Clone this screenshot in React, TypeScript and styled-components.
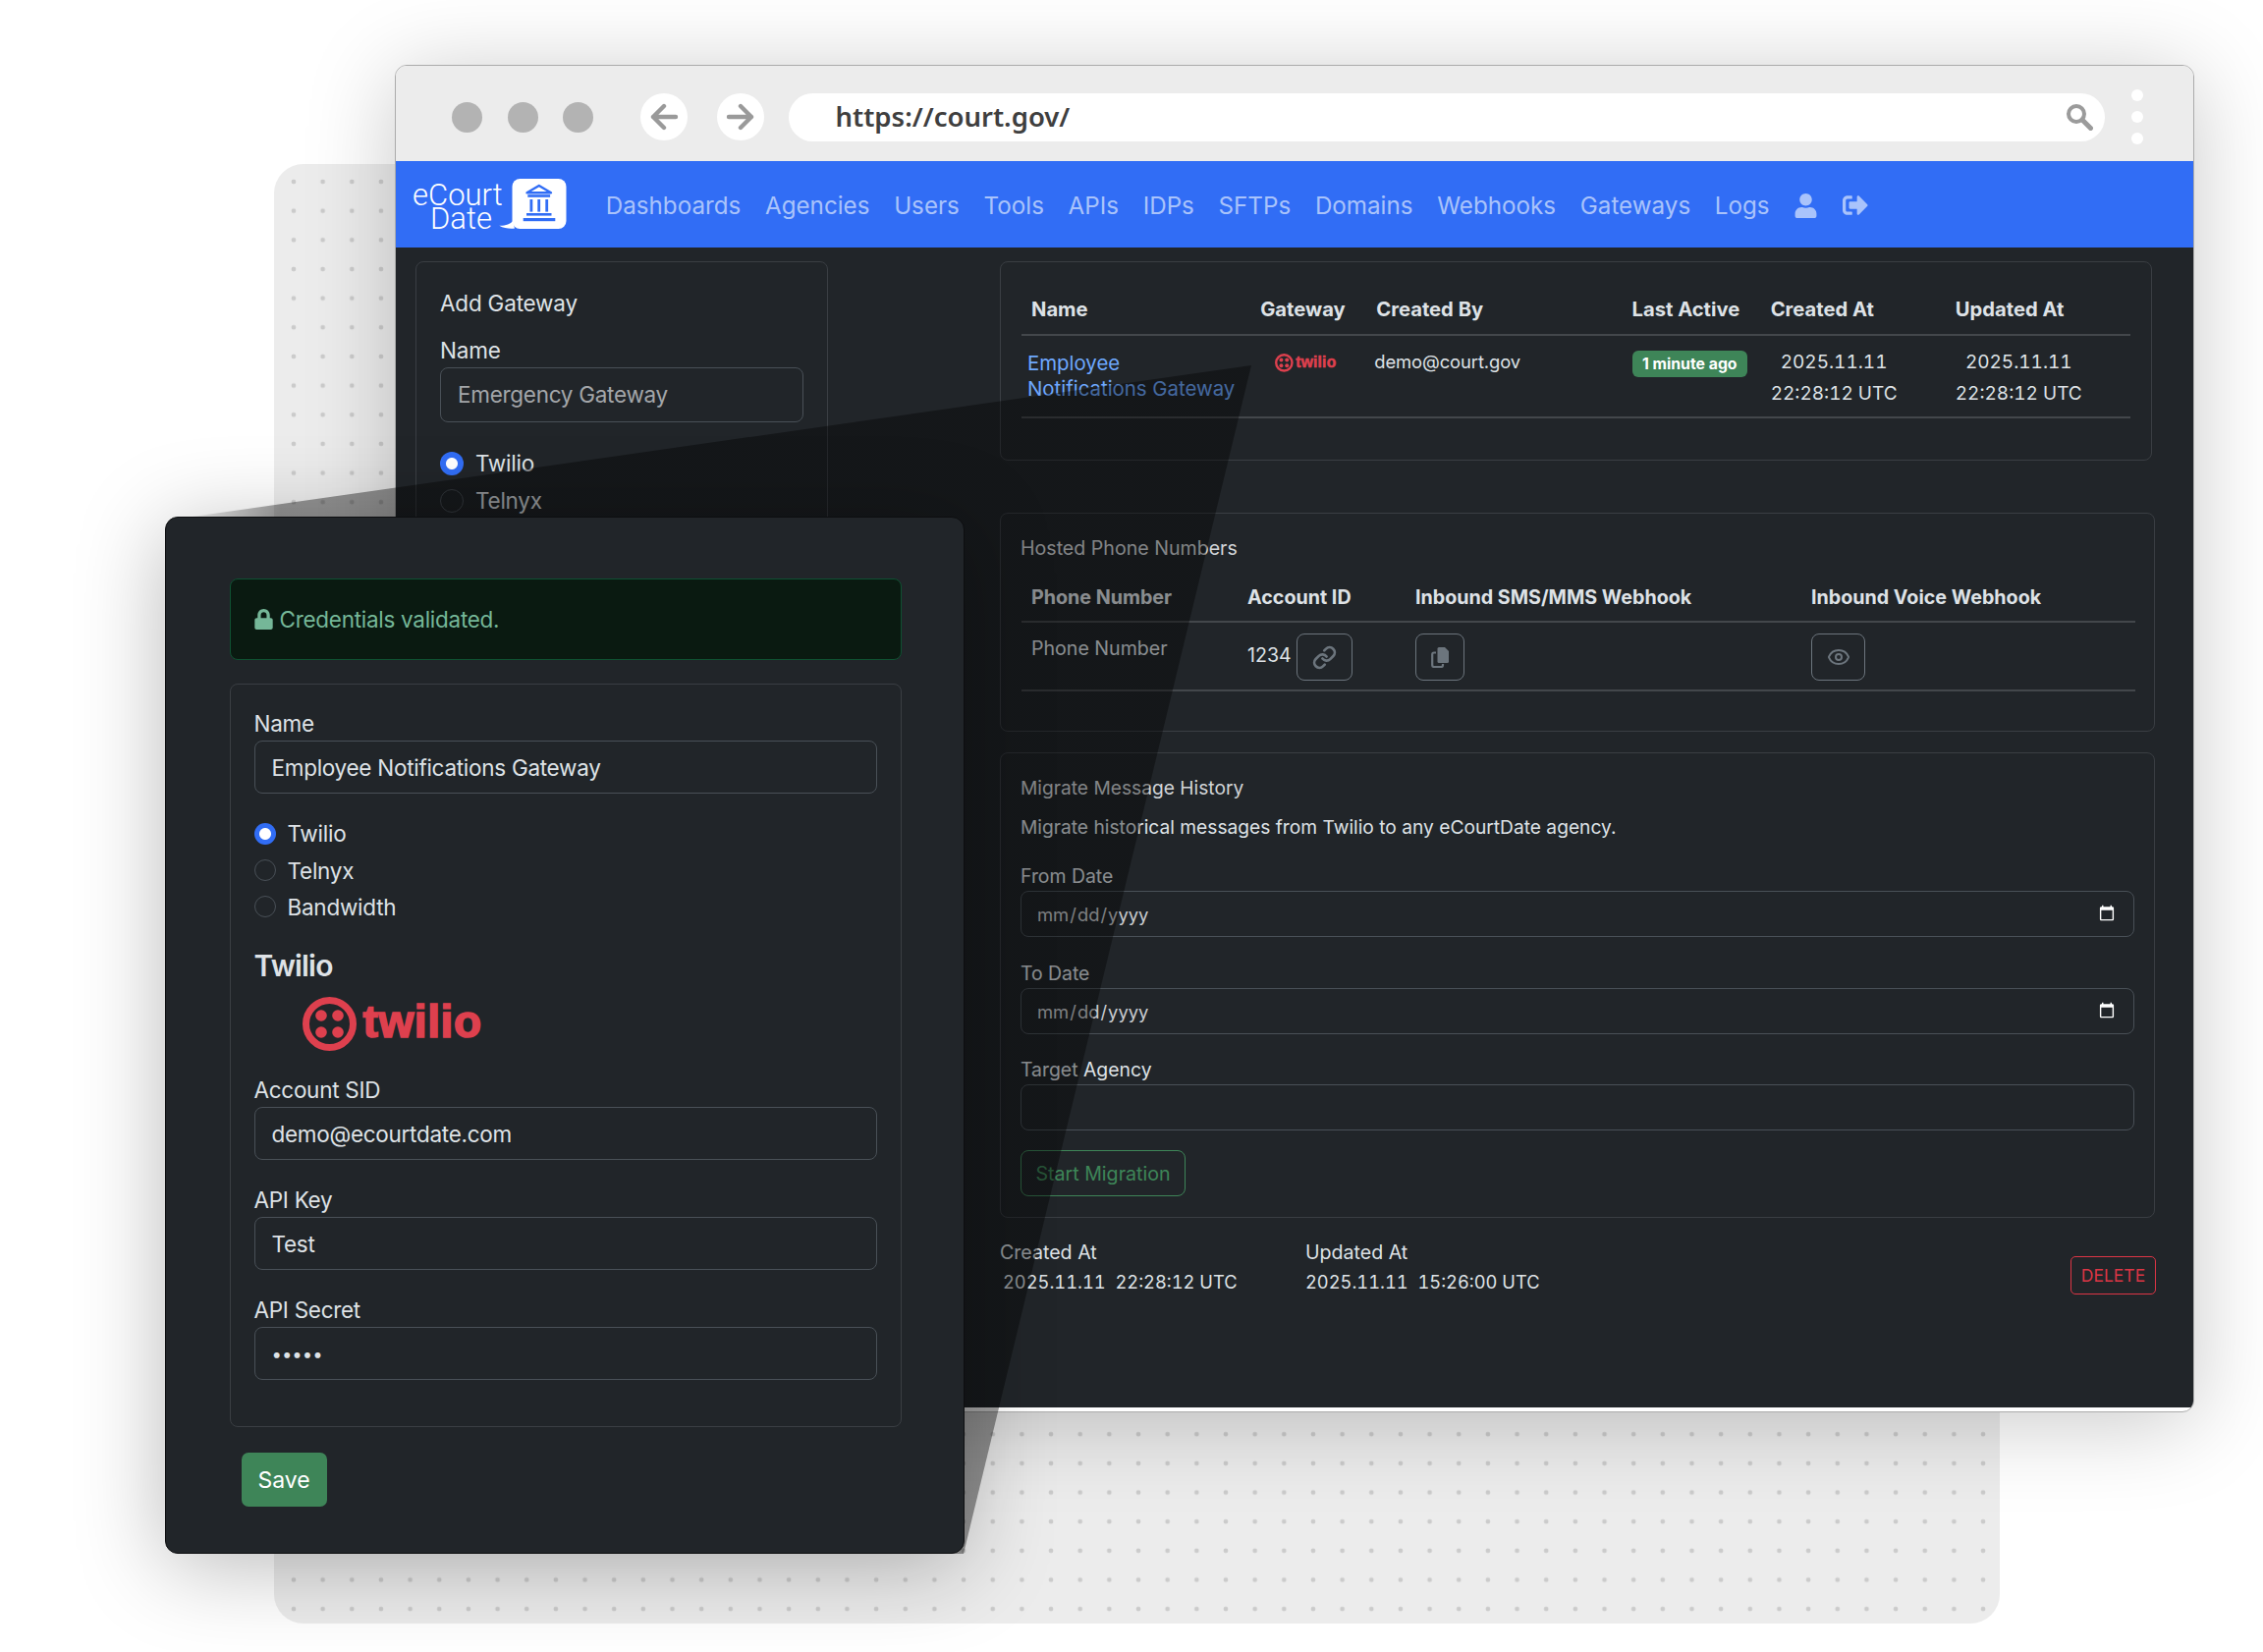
import React from "react";
import styled, { createGlobalStyle } from "styled-components";
import { FaUser, FaSignOutAlt, FaLock } from "react-icons/fa";
import { Link as LinkIcon, Eye } from "lucide-react";

const Global = createGlobalStyle`
  html, body { margin: 0; padding: 0; background: #fff; }
  body { font-family: Inter, "Liberation Sans", sans-serif; color: #dee2e6; }
  * { box-sizing: border-box; }
`;

const Canvas = styled.div`
  position: relative;
  width: 2304px;
  height: 1682px;
  overflow: hidden;
  background: #fff;
`;

const DottedPanel = styled.div`
  position: absolute;
  left: 279px;
  top: 167px;
  width: 1757px;
  height: 1486px;
  border-radius: 30px;
  background-color: #ececec;
  background-image: radial-gradient(circle, #cbcbcb 2px, transparent 2.7px);
  background-size: 29.67px 29.67px;
  background-position: 5.17px 3.17px;
`;

const BrowserWindow = styled.div`
  position: absolute;
  left: 402px;
  top: 66px;
  width: 1832px;
  height: 1372px;
  display: flex;
  flex-direction: column;
  background: #fff;
  border: 1.5px solid #ababab;
  border-radius: 12px;
  overflow: hidden;
  box-shadow: 0 10px 90px rgba(0, 0, 0, 0.22);
`;

const Chrome = styled.div`
  flex: 0 0 97px;
  display: flex;
  align-items: center;
  padding: 7px 51px 0 57px;
  background: #ececec;
`;

const TrafficDot = styled.span`
  width: 31px;
  height: 31px;
  border-radius: 50%;
  background: #b3b3b3;
  margin-right: 25.5px;
`;

const RoundButton = styled.span<{ $gap: number }>`
  width: 48px;
  height: 48px;
  border-radius: 50%;
  background: #fff;
  display: flex;
  align-items: center;
  justify-content: center;
  margin-left: ${(p) => p.$gap}px;
`;

const UrlBar = styled.div`
  flex: 1;
  height: 49px;
  margin-left: 25px;
  border-radius: 25px;
  background: #fff;
  display: flex;
  align-items: center;
  justify-content: space-between;
  padding: 0 12px 0 48px;
  font-family: "Noto Sans", sans-serif;
  font-weight: 600;
  font-size: 27.5px;
  color: #3f3f3f;
`;

const UrlText = styled.span`
  margin-top: -2px;
`;

const Kebab = styled.div`
  margin-left: 27px;
  display: flex;
  flex-direction: column;
  gap: 10px;
`;

const KebabDot = styled.span`
  width: 12px;
  height: 12px;
  border-radius: 50%;
  background: #fff;
`;

const Navbar = styled.nav`
  flex: 0 0 88px;
  display: flex;
  align-items: center;
  padding-left: 17px;
  background: #316df5;
`;

const Brand = styled.div`
  display: flex;
  align-items: center;
  margin-right: 40px;
`;

const BrandText = styled.div`
  font-family: Roboto, sans-serif;
  font-weight: 300;
  font-size: 31px;
  line-height: 24px;
  color: #fff;
  margin-right: -5px;
  padding-top: 5px;
`;

const BrandLine = styled.div<{ $indent?: number }>`
  margin-left: ${(p) => p.$indent ?? 0}px;
`;

const NavLinks = styled.div`
  display: flex;
  align-items: center;
  gap: 24.7px;
  padding-top: 2px;
  font-size: 24.2px;
  color: #a9c3fb;
`;

const NavLink = styled.span``;

const Main = styled.div`
  flex: 1;
  display: grid;
  grid-template-columns: 420px 1176px;
  column-gap: 175px;
  align-items: start;
  padding: 14px 0 0 20px;
  background: #212529;
  margin-bottom: 4px;
`;

const Card = styled.section`
  border: 1.5px solid #3a3e43;
  border-radius: 8px;
`;

const AddCard = styled(Card)`
  padding: 24.5px 24px 40px 24px;
`;

const AddTitle = styled.div`
  font-size: 22.5px;
  letter-spacing: -0.2px;
  line-height: 34px;
`;

const AddLabel = styled.div`
  font-size: 22.5px;
  letter-spacing: -0.2px;
  line-height: 34px;
  margin-top: 14px;
`;

const TextInput = styled.input<{ $height?: number }>`
  display: block;
  width: 100%;
  height: ${(p) => p.$height ?? 54}px;
  padding: 0 17px;
  font: 400 22.5px Inter, sans-serif;
  letter-spacing: -0.28px;
  color: #dee2e6;
  background: #212529;
  border: 1.5px solid #495057;
  border-radius: 8px;
  outline: none;
  &::placeholder { color: #a3a6a9; opacity: 1; }
`;

const SecretInput = styled(TextInput)`
  font-size: 18.5px;
  letter-spacing: 0;
`;

const RadioGroup = styled.div<{ $top: number; $row: number }>`
  margin-top: ${(p) => p.$top}px;
  display: grid;
  grid-auto-rows: ${(p) => p.$row}px;
`;

const RadioRow = styled.label`
  display: flex;
  align-items: center;
  gap: 12px;
  font-size: 22.5px;
  letter-spacing: -0.25px;
`;

const Radio = styled.input.attrs({ type: "radio", readOnly: true })<{ $size: number }>`
  appearance: none;
  margin: 0;
  width: ${(p) => p.$size}px;
  height: ${(p) => p.$size}px;
  border-radius: 50%;
  border: 1.5px solid #495057;
  background: transparent;
  &:checked {
    border: none;
    background: radial-gradient(circle, #fff 0 5.5px, #316df5 6.5px);
  }
`;

const RightColumn = styled.div`
  display: flex;
  flex-direction: column;
`;

const GatewaysCard = styled(Card)`
  margin-right: 3px;
  padding: 22px 21px 42px 21px;
`;

const HostedCard = styled(Card)`
  margin-top: 53px;
  padding: 20px 20px 40px 21px;
`;

const MigrateCard = styled(Card)`
  margin-top: 21px;
  padding: 19.5px 20px 21px 20px;
`;

const DataTable = styled.table`
  width: 100%;
  table-layout: fixed;
  border-collapse: collapse;
  font-size: 19.6px;
`;

const HeadCell = styled.th<{ $height: number; $size: number }>`
  height: ${(p) => p.$height}px;
  padding: 0 0 0 10px;
  text-align: left;
  font-size: ${(p) => p.$size}px;
  font-weight: 700;
  border-bottom: 2px solid #43474b;
  white-space: nowrap;
`;

const BodyCell = styled.td<{ $height: number }>`
  height: ${(p) => p.$height}px;
  padding: 12px 0 0 10px;
  vertical-align: top;
  border-bottom: 2px solid #43474b;
  line-height: 26px;
`;

const PhoneCell = styled(BodyCell)`
  padding-top: 13px;
`;

const NameLink = styled.a`
  display: block;
  margin: 2.5px 0 0 -4px;
  color: #6ea8fe;
  font-size: 20.4px;
  line-height: 26.5px;
  white-space: nowrap;
`;

const SmallLogoSlot = styled.div`
  margin: 5px 0 0 15px;
`;

const OwnerText = styled.div`
  margin: 1px 0 0 -2px;
  font-size: 18.4px;
  letter-spacing: -0.1px;
`;

const Badge = styled.span`
  display: inline-block;
  margin-top: 3px;
  padding: 0 10.5px;
  height: 27px;
  line-height: 27px;
  border-radius: 6px;
  background: #3e8558;
  color: #fff;
  font-size: 15.8px;
  font-weight: 700;
  white-space: nowrap;
`;

const StampCell = styled.div`
  display: inline-block;
  margin-top: -1px;
  text-align: center;
  font-size: 19px;
  line-height: 32px;
  white-space: nowrap;
  font-feature-settings: "tnum";
`;

const SectionTitle = styled.div`
  font-size: 19.2px;
  line-height: 30px;
  color: #d2d5d8;
`;

const HostedTitle = styled(SectionTitle)`
  margin-left: -1px;
  font-size: 19.6px;
`;

const TableGap = styled.div`
  height: 11px;
`;

const AccountCell = styled.div`
  display: flex;
  align-items: flex-start;
  gap: 5px;
  margin-top: -1px;
`;

const AccountValue = styled.span`
  margin-top: 8.5px;
`;

const IconButton = styled.span<{ $width: number }>`
  display: inline-flex;
  align-items: center;
  justify-content: center;
  width: ${(p) => p.$width}px;
  height: 48px;
  border: 1.5px solid #6c757d;
  border-radius: 8px;
  color: #6c757d;
`;

const IconCell = styled.div`
  margin-top: -1px;
`;

const Description = styled.div`
  margin-top: 10.5px;
  font-size: 19.2px;
  line-height: 30px;
`;

const MigrateLabel = styled.div<{ $top: number }>`
  margin-top: ${(p) => p.$top}px;
  font-size: 19.4px;
  line-height: 30px;
`;

const DateInput = styled.input.attrs({ type: "date" })`
  display: block;
  width: 100%;
  height: 47px;
  padding: 0 16px 0 15px;
  color-scheme: dark;
  font: 400 18.4px Inter, sans-serif;
  color: #c9ccd0;
  background: #212529;
  border: 1.5px solid #495057;
  border-radius: 8px;
  outline: none;
`;

const PlainSelect = styled.div`
  height: 47px;
  border: 1.5px solid #495057;
  border-radius: 8px;
`;

const OutlineButton = styled.button`
  display: block;
  margin-top: 20px;
  width: 168px;
  height: 47px;
  padding: 0;
  background: transparent;
  border: 1.5px solid #3e8558;
  border-radius: 8px;
  color: #3e8558;
  font: 400 19.6px Inter, sans-serif;
`;

const FooterRow = styled.div`
  margin-top: 20px;
  display: flex;
  align-items: flex-start;
  font-size: 19.6px;
  line-height: 30px;
`;

const StampBlock = styled.div<{ $width: number }>`
  width: ${(p) => p.$width}px;
  white-space: pre;
`;

const StampValue = styled.div<{ $indent?: number }>`
  margin-left: ${(p) => p.$indent ?? 0}px;
  font-size: 18.3px;
  font-feature-settings: "tnum";
`;

const DeleteButton = styled.button`
  margin: 19px -1px 0 auto;
  width: 87px;
  height: 39px;
  padding: 0;
  background: transparent;
  border: 1.5px solid #dc3545;
  border-radius: 5px;
  color: #dc3545;
  font: 400 17.5px Inter, sans-serif;
`;

const Wedge = styled.svg`
  position: absolute;
  left: 0;
  top: 0;
  pointer-events: none;
`;

const FrontPanel = styled.div`
  position: absolute;
  left: 168px;
  top: 526px;
  width: 814px;
  height: 1056px;
  padding: 62px 63px 0 64.5px;
  background: #212529;
  border: 1.5px solid #0d0e10;
  border-radius: 13px;
  box-shadow: 0 12px 90px rgba(0, 0, 0, 0.28);
`;

const SuccessAlert = styled.div`
  height: 83px;
  display: flex;
  align-items: center;
  gap: 6px;
  padding: 0 23px;
  font-size: 22.5px;
  letter-spacing: -0.28px;
  color: #75b798;
  background: #0a1a11;
  border: 1.5px solid #0f5132;
  border-radius: 8px;
`;

const GatewayForm = styled(Card)`
  margin-top: 24px;
  height: 757px;
  padding: 23px 24px 0 24px;
`;

const FieldLabel = styled.div<{ $top?: number }>`
  margin-top: ${(p) => p.$top ?? 0}px;
  font-size: 22.5px;
  letter-spacing: -0.28px;
  line-height: 34px;
`;

const GatewayHeading = styled.h2`
  margin: 19px 0 0;
  font-size: 30px;
  line-height: 44px;
  font-weight: 600;
  letter-spacing: -0.8px;
`;

const LogoSlot = styled.div`
  margin: 9.5px 0 0 49px;
`;

const Mark = styled.div<{ $scale: number }>`
  display: inline-flex;
  align-items: center;
  gap: ${(p) => p.$scale * 7}px;
  color: #de404e;
`;

const MarkWord = styled.span<{ $scale: number }>`
  font-family: "Liberation Sans", sans-serif;
  font-weight: 700;
  font-size: ${(p) => p.$scale * 46}px;
  line-height: 1;
  letter-spacing: ${(p) => p.$scale * 0.6}px;
  -webkit-text-stroke: ${(p) => p.$scale * 1.7}px #de404e;
  margin-top: ${(p) => p.$scale * -5}px;
`;

const SaveButton = styled.button`
  display: block;
  margin: 26px 0 0 12px;
  width: 87px;
  height: 55px;
  padding: 0;
  border: none;
  border-radius: 7px;
  background: #3e8558;
  color: #fff;
  font: 400 23px Inter, sans-serif;
`;

const TwilioMark = ({ scale }: { scale: number }) => (
  <Mark $scale={scale}>
    <svg width={55 * scale} height={55 * scale} viewBox="0 0 55 55" aria-hidden="true">
      <circle cx="27.5" cy="27.5" r="24" fill="none" stroke="#de404e" strokeWidth="7" />
      <circle cx="19" cy="19" r="5.8" fill="#de404e" />
      <circle cx="36" cy="19" r="5.8" fill="#de404e" />
      <circle cx="19" cy="36" r="5.8" fill="#de404e" />
      <circle cx="36" cy="36" r="5.8" fill="#de404e" />
    </svg>
    <MarkWord $scale={scale}>twilio</MarkWord>
  </Mark>
);

const BubbleLogo = () => (
  <svg width="70" height="52" viewBox="0 0 70 52" aria-hidden="true">
    <rect x="14.5" y="0" width="55" height="51" rx="8" fill="#fff" />
    <path d="M15 43 C13 46 7 48 1.3 47.7 C6 50.5 12 51 17 50.5 Z" fill="#fff" />
    <path d="M41.8 7 L54 14.2 H29.5 Z" fill="none" stroke="#316df5" strokeWidth="2.4" strokeLinejoin="round" />
    <rect x="30.3" y="16.2" width="22.8" height="2.6" fill="#316df5" />
    <rect x="32.5" y="21" width="2.8" height="12.6" fill="#316df5" />
    <rect x="40.3" y="21" width="2.8" height="12.6" fill="#316df5" />
    <rect x="48.3" y="21" width="2.8" height="12.6" fill="#316df5" />
    <rect x="29" y="35" width="25.5" height="2.6" fill="#316df5" />
    <rect x="25.7" y="40" width="32.6" height="3.2" fill="#316df5" />
  </svg>
);

const ArrowGlyph = ({ flip }: { flip?: boolean }) => (
  <svg width="30" height="28" viewBox="0 0 30 28" aria-hidden="true" style={flip ? { transform: "scaleX(-1)" } : undefined}>
    <path d="M27 14H4M15 3 4 14l11 11" fill="none" stroke="#9a9a9a" strokeWidth="4.4" strokeLinecap="round" strokeLinejoin="round" />
  </svg>
);

const SearchGlyph = () => (
  <svg width="28" height="28" viewBox="0 0 28 28" aria-hidden="true">
    <circle cx="11" cy="11" r="8" fill="none" stroke="#9b9b9b" strokeWidth="4" />
    <path d="M17 17 25.5 25.5" stroke="#9b9b9b" strokeWidth="5" strokeLinecap="round" />
  </svg>
);

const CopyGlyph = () => (
  <svg width="18" height="21" viewBox="0 0 18 21" aria-hidden="true">
    <path d="M5 5.5H3A1.8 1.8 0 0 0 1.2 7.3v10.9A1.8 1.8 0 0 0 3 20h7.2A1.8 1.8 0 0 0 12 18.2V17" fill="none" stroke="#6c757d" strokeWidth="2.2" />
    <path d="M8 0h6l4 4v10.5a1.5 1.5 0 0 1-1.5 1.5H8a1.5 1.5 0 0 1-1.5-1.5v-13A1.5 1.5 0 0 1 8 0Z" fill="#6c757d" />
  </svg>
);

const navItems = ["Dashboards", "Agencies", "Users", "Tools", "APIs", "IDPs", "SFTPs", "Domains", "Webhooks", "Gateways", "Logs"];

export default function App() {
  return (
    <Canvas>
      <Global />
      <DottedPanel />
      <BrowserWindow>
        <Chrome>
          <TrafficDot />
          <TrafficDot />
          <TrafficDot />
          <RoundButton $gap={22}>
            <ArrowGlyph />
          </RoundButton>
          <RoundButton $gap={30}>
            <ArrowGlyph flip />
          </RoundButton>
          <UrlBar>
            <UrlText>https://court.gov/</UrlText>
            <SearchGlyph />
          </UrlBar>
          <Kebab>
            <KebabDot />
            <KebabDot />
            <KebabDot />
          </Kebab>
        </Chrome>
        <Navbar>
          <Brand>
            <BrandText>
              <BrandLine>eCourt</BrandLine>
              <BrandLine $indent={18}>Date</BrandLine>
            </BrandText>
            <BubbleLogo />
          </Brand>
          <NavLinks>
            {navItems.map((n) => (
              <NavLink key={n}>{n}</NavLink>
            ))}
            <FaUser size={25} />
            <FaSignOutAlt size={26} />
          </NavLinks>
        </Navbar>
        <Main>
          <AddCard>
            <AddTitle>Add Gateway</AddTitle>
            <AddLabel>Name</AddLabel>
            <TextInput $height={56} placeholder="Emergency Gateway" readOnly />
            <RadioGroup $top={23} $row={38}>
              <RadioRow>
                <Radio $size={24} checked name="add-gw" />
                Twilio
              </RadioRow>
              <RadioRow>
                <Radio $size={24} name="add-gw" />
                Telnyx
              </RadioRow>
              <RadioRow>
                <Radio $size={24} name="add-gw" />
                Bandwidth
              </RadioRow>
            </RadioGroup>
          </AddCard>
          <RightColumn>
            <GatewaysCard>
              <DataTable>
                <colgroup>
                  <col style={{ width: 233 }} />
                  <col style={{ width: 118 }} />
                  <col style={{ width: 260 }} />
                  <col style={{ width: 141 }} />
                  <col style={{ width: 188 }} />
                  <col style={{ width: 188 }} />
                </colgroup>
                <thead>
                  <tr>
                    {["Name", "Gateway", "Created By", "Last Active", "Created At", "Updated At"].map((h) => (
                      <HeadCell key={h} $height={52} $size={20.2}>
                        {h}
                      </HeadCell>
                    ))}
                  </tr>
                </thead>
                <tbody>
                  <tr>
                    <BodyCell $height={84}>
                      <NameLink>
                        Employee
                        <br />
                        Notifications Gateway
                      </NameLink>
                    </BodyCell>
                    <BodyCell $height={84}>
                      <SmallLogoSlot>
                        <TwilioMark scale={0.34} />
                      </SmallLogoSlot>
                    </BodyCell>
                    <BodyCell $height={84}>
                      <OwnerText>demo@court.gov</OwnerText>
                    </BodyCell>
                    <BodyCell $height={84}>
                      <Badge>1 minute ago</Badge>
                    </BodyCell>
                    <BodyCell $height={84}>
                      <StampCell>
                        2025.11.11
                        <br />
                        22:28:12 UTC
                      </StampCell>
                    </BodyCell>
                    <BodyCell $height={84}>
                      <StampCell>
                        2025.11.11
                        <br />
                        22:28:12 UTC
                      </StampCell>
                    </BodyCell>
                  </tr>
                </tbody>
              </DataTable>
            </GatewaysCard>

            <HostedCard>
              <HostedTitle>Hosted Phone Numbers</HostedTitle>
              <TableGap />
              <DataTable>
                <colgroup>
                  <col style={{ width: 220 }} />
                  <col style={{ width: 171 }} />
                  <col style={{ width: 403 }} />
                  <col style={{ width: 340 }} />
                </colgroup>
                <thead>
                  <tr>
                    {["Phone Number", "Account ID", "Inbound SMS/MMS Webhook", "Inbound Voice Webhook"].map((h) => (
                      <HeadCell key={h} $height={49} $size={19.7}>
                        {h}
                      </HeadCell>
                    ))}
                  </tr>
                </thead>
                <tbody>
                  <tr>
                    <PhoneCell $height={70}>Phone Number</PhoneCell>
                    <BodyCell $height={70}>
                      <AccountCell>
                        <AccountValue>1234</AccountValue>
                        <IconButton $width={57}>
                          <LinkIcon size={25} strokeWidth={2.6} />
                        </IconButton>
                      </AccountCell>
                    </BodyCell>
                    <BodyCell $height={70}>
                      <IconCell>
                        <IconButton $width={50}>
                          <CopyGlyph />
                        </IconButton>
                      </IconCell>
                    </BodyCell>
                    <BodyCell $height={70}>
                      <IconCell>
                        <IconButton $width={55}>
                          <Eye size={24} strokeWidth={2} />
                        </IconButton>
                      </IconCell>
                    </BodyCell>
                  </tr>
                </tbody>
              </DataTable>
            </HostedCard>

            <MigrateCard>
              <SectionTitle>Migrate Message History</SectionTitle>
              <Description>Migrate historical messages from Twilio to any eCourtDate agency.</Description>
              <MigrateLabel $top={20}>From Date</MigrateLabel>
              <DateInput />
              <MigrateLabel $top={22}>To Date</MigrateLabel>
              <DateInput />
              <MigrateLabel $top={21}>Target Agency</MigrateLabel>
              <PlainSelect />
              <OutlineButton>Start Migration</OutlineButton>
            </MigrateCard>

            <FooterRow>
              <StampBlock $width={311}>
                Created At
                <StampValue $indent={3}>2025.11.11{"  "}22:28:12 UTC</StampValue>
              </StampBlock>
              <StampBlock $width={300}>
                Updated At
                <StampValue>2025.11.11{"  "}15:26:00 UTC</StampValue>
              </StampBlock>
              <DeleteButton>DELETE</DeleteButton>
            </FooterRow>
          </RightColumn>
        </Main>
      </BrowserWindow>

      <Wedge width="2304" height="1682" viewBox="0 0 2304 1682" aria-hidden="true">
        <defs>
          <linearGradient id="wedgeFade" gradientUnits="userSpaceOnUse" x1="180" y1="0" x2="285" y2="0">
            <stop offset="0" stopColor="#000" stopOpacity="0" />
            <stop offset="1" stopColor="#000" stopOpacity="0.38" />
          </linearGradient>
        </defs>
        <polygon points="168,530 1274,372 981,1582 168,1582" fill="url(#wedgeFade)" />
      </Wedge>

      <FrontPanel>
        <SuccessAlert>
          <FaLock size={21} />
          Credentials validated.
        </SuccessAlert>
        <GatewayForm>
          <FieldLabel>Name</FieldLabel>
          <TextInput defaultValue="Employee Notifications Gateway" readOnly />
          <RadioGroup $top={22} $row={37.4}>
            <RadioRow>
              <Radio $size={22} checked name="edit-gw" />
              Twilio
            </RadioRow>
            <RadioRow>
              <Radio $size={22} name="edit-gw" />
              Telnyx
            </RadioRow>
            <RadioRow>
              <Radio $size={22} name="edit-gw" />
              Bandwidth
            </RadioRow>
          </RadioGroup>
          <GatewayHeading>Twilio</GatewayHeading>
          <LogoSlot>
            <TwilioMark scale={1} />
          </LogoSlot>
          <FieldLabel $top={19.5}>Account SID</FieldLabel>
          <TextInput defaultValue="demo@ecourtdate.com" readOnly />
          <FieldLabel $top={24}>API Key</FieldLabel>
          <TextInput defaultValue="Test" readOnly />
          <FieldLabel $top={24}>API Secret</FieldLabel>
          <SecretInput type="password" defaultValue="Test1" readOnly />
        </GatewayForm>
        <SaveButton>Save</SaveButton>
      </FrontPanel>
    </Canvas>
  );
}
